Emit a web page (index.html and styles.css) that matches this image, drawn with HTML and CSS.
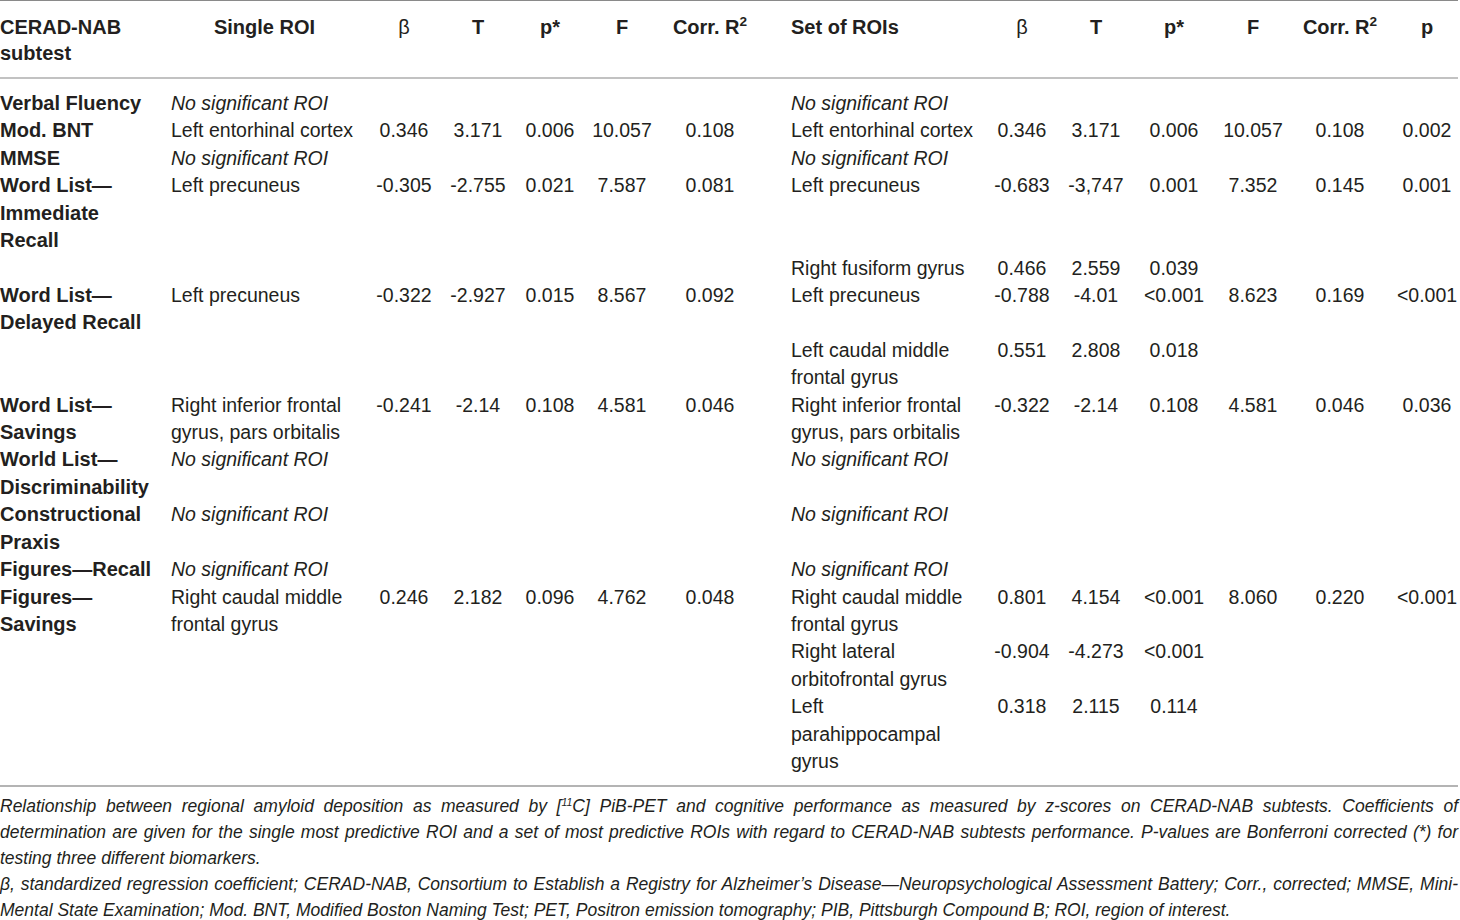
FILE: index.html
```html
<!DOCTYPE html>
<html lang="en">
<head>
<meta charset="utf-8">
<title>CERAD-NAB regional amyloid table</title>
<link rel="stylesheet" href="styles.css">
</head>
<body>
<div class="page">
<table class="data">
  <thead>
    <tr>
      <th class="c1 left">CERAD-NAB subtest</th>
      <th class="c2">Single ROI</th>
      <th class="c3 num"><span class="sym">β</span></th>
      <th class="c4 num">T</th>
      <th class="c5 num">p*</th>
      <th class="c6 num">F</th>
      <th class="c7 num">Corr. R<sup>2</sup></th>
      <th class="c8 left">Set of ROIs</th>
      <th class="c9 num"><span class="sym">β</span></th>
      <th class="c10 num">T</th>
      <th class="c11 num">p*</th>
      <th class="c12 num">F</th>
      <th class="c13 num">Corr. R<sup>2</sup></th>
      <th class="c14 num">p</th>
    </tr>
  </thead>
  <tbody>
    <tr>
      <td class="test">Verbal Fluency</td>
      <td class="roi"><em>No significant ROI</em></td>
      <td class="pb"></td><td></td><td></td><td></td><td></td>
      <td class="set"><em>No significant ROI</em></td>
      <td class="pb"></td><td></td><td></td><td></td><td></td><td class="pp"></td>
    </tr>
    <tr>
      <td class="test">Mod. BNT</td>
      <td class="roi">Left entorhinal cortex</td>
      <td class="pb">0.346</td><td>3.171</td><td>0.006</td><td>10.057</td><td>0.108</td>
      <td class="set">Left entorhinal cortex</td>
      <td class="pb">0.346</td><td>3.171</td><td>0.006</td><td>10.057</td><td>0.108</td><td class="pp">0.002</td>
    </tr>
    <tr>
      <td class="test">MMSE</td>
      <td class="roi"><em>No significant ROI</em></td>
      <td class="pb"></td><td></td><td></td><td></td><td></td>
      <td class="set"><em>No significant ROI</em></td>
      <td class="pb"></td><td></td><td></td><td></td><td></td><td class="pp"></td>
    </tr>
    <tr>
      <td class="test">Word List—Immediate Recall</td>
      <td class="roi">Left precuneus</td>
      <td class="pb">-0.305</td><td>-2.755</td><td>0.021</td><td>7.587</td><td>0.081</td>
      <td class="set">Left precuneus</td>
      <td class="pb">-0.683</td><td>-3,747</td><td>0.001</td><td>7.352</td><td>0.145</td><td class="pp">0.001</td>
    </tr>
    <tr>
      <td class="test"></td>
      <td class="roi"></td>
      <td class="pb"></td><td></td><td></td><td></td><td></td>
      <td class="set">Right fusiform gyrus</td>
      <td class="pb">0.466</td><td>2.559</td><td>0.039</td><td></td><td></td><td class="pp"></td>
    </tr>
    <tr>
      <td class="test">Word List—Delayed Recall</td>
      <td class="roi">Left precuneus</td>
      <td class="pb">-0.322</td><td>-2.927</td><td>0.015</td><td>8.567</td><td>0.092</td>
      <td class="set">Left precuneus</td>
      <td class="pb">-0.788</td><td>-4.01</td><td>&lt;0.001</td><td>8.623</td><td>0.169</td><td class="pp">&lt;0.001</td>
    </tr>
    <tr>
      <td class="test"></td>
      <td class="roi"></td>
      <td class="pb"></td><td></td><td></td><td></td><td></td>
      <td class="set">Left caudal middle frontal gyrus</td>
      <td class="pb">0.551</td><td>2.808</td><td>0.018</td><td></td><td></td><td class="pp"></td>
    </tr>
    <tr>
      <td class="test">Word List—Savings</td>
      <td class="roi">Right inferior frontal gyrus, pars orbitalis</td>
      <td class="pb">-0.241</td><td>-2.14</td><td>0.108</td><td>4.581</td><td>0.046</td>
      <td class="set">Right inferior frontal gyrus, pars orbitalis</td>
      <td class="pb">-0.322</td><td>-2.14</td><td>0.108</td><td>4.581</td><td>0.046</td><td class="pp">0.036</td>
    </tr>
    <tr>
      <td class="test">World List—Discriminability</td>
      <td class="roi"><em>No significant ROI</em></td>
      <td class="pb"></td><td></td><td></td><td></td><td></td>
      <td class="set"><em>No significant ROI</em></td>
      <td class="pb"></td><td></td><td></td><td></td><td></td><td class="pp"></td>
    </tr>
    <tr>
      <td class="test">Constructional Praxis</td>
      <td class="roi"><em>No significant ROI</em></td>
      <td class="pb"></td><td></td><td></td><td></td><td></td>
      <td class="set"><em>No significant ROI</em></td>
      <td class="pb"></td><td></td><td></td><td></td><td></td><td class="pp"></td>
    </tr>
    <tr>
      <td class="test">Figures—Recall</td>
      <td class="roi"><em>No significant ROI</em></td>
      <td class="pb"></td><td></td><td></td><td></td><td></td>
      <td class="set"><em>No significant ROI</em></td>
      <td class="pb"></td><td></td><td></td><td></td><td></td><td class="pp"></td>
    </tr>
    <tr>
      <td class="test">Figures—Savings</td>
      <td class="roi">Right caudal middle frontal gyrus</td>
      <td class="pb">0.246</td><td>2.182</td><td>0.096</td><td>4.762</td><td>0.048</td>
      <td class="set">Right caudal middle frontal gyrus</td>
      <td class="pb">0.801</td><td>4.154</td><td>&lt;0.001</td><td>8.060</td><td>0.220</td><td class="pp">&lt;0.001</td>
    </tr>
    <tr>
      <td class="test"></td>
      <td class="roi"></td>
      <td class="pb"></td><td></td><td></td><td></td><td></td>
      <td class="set">Right lateral orbitofrontal gyrus</td>
      <td class="pb">-0.904</td><td>-4.273</td><td>&lt;0.001</td><td></td><td></td><td class="pp"></td>
    </tr>
    <tr>
      <td class="test"></td>
      <td class="roi"></td>
      <td class="pb"></td><td></td><td></td><td></td><td></td>
      <td class="set">Left parahippocampal gyrus</td>
      <td class="pb">0.318</td><td>2.115</td><td>0.114</td><td></td><td></td><td class="pp"></td>
    </tr>
  </tbody>
</table>
<div class="notes">
  <p>Relationship between regional amyloid deposition as measured by [<sup>11</sup>C] PiB-PET and cognitive performance as measured by z-scores on CERAD-NAB subtests. Coefficients of determination are given for the single most predictive ROI and a set of most predictive ROIs with regard to CERAD-NAB subtests performance. P-values are Bonferroni corrected (*) for testing three different biomarkers.</p>
  <p>β, standardized regression coefficient; CERAD-NAB, Consortium to Establish a Registry for Alzheimer’s Disease—Neuropsychological Assessment Battery; Corr., corrected; MMSE, Mini-Mental State Examination; Mod. BNT, Modified Boston Naming Test; PET, Positron emission tomography; PIB, Pittsburgh Compound B; ROI, region of interest.</p>
</div>
</div>
</body>
</html>
```

FILE: styles.css
```css
html, body {
  margin: 0;
  padding: 0;
  background: #ffffff;
}

.page {
  width: 1458px;
  color: #231f20;
  font-family: "Liberation Sans", Arial, sans-serif;
}

.data {
  width: 1458px;
  table-layout: fixed;
  border-collapse: collapse;
  border-top: 1px solid #8a8a8a;
  border-bottom: 2px solid #b4b4b4;
}

.data th,
.data td {
  box-sizing: border-box;
  padding: 0;
  vertical-align: top;
}

.data thead th {
  font-size: 20px;
  line-height: 26px;
  font-weight: 700;
  text-align: center;
  padding-top: 13px;
  padding-bottom: 11px;
  border-bottom: 2px solid #c2c2c2;
}

.data thead th.left { text-align: left; }

.data .sym { font-weight: 400; }

.data sup {
  font-size: 0.68em;
  line-height: 0;
  vertical-align: 0.6em;
}

/* column widths */
.c1 { width: 171px; padding-right: 12px !important; }
.c2 { width: 187px; }
.c3 { width: 86px; padding-left: 6px !important; }
.c4 { width: 68px; }
.c5 { width: 76px; }
.c6 { width: 68px; }
.c7 { width: 108px; }
.c8 { width: 212px; padding-left: 27px !important; }
.c9 { width: 86px; padding-left: 6px !important; }
.c10 { width: 68px; }
.c11 { width: 88px; }
.c12 { width: 70px; }
.c13 { width: 104px; }
.c14 { width: 66px; padding-left: 4px !important; }

.data tbody td {
  font-size: 19.5px;
  line-height: 27.42px;
  text-align: center;
  white-space: nowrap;
}

.data tbody tr:first-child td { padding-top: 11px; }
.data tbody tr:last-child td { padding-bottom: 9px; }

.data tbody td.test {
  font-size: 20px;
  font-weight: 700;
  text-align: left;
  white-space: normal;
  padding-right: 12px;
}

.data tbody td.roi {
  text-align: left;
  white-space: normal;
  padding-right: 4px;
}

.data tbody td.set {
  text-align: left;
  white-space: normal;
  padding-left: 27px;
}

.data tbody td.pb { padding-left: 6px; }
.data tbody td.pp { padding-left: 4px; }

.notes {
  padding-top: 6px;
}

.notes p {
  margin: 0;
  font-size: 17.5px;
  line-height: 26px;
  font-style: italic;
  text-align: justify;
}

.notes sup {
  font-size: 0.6em;
  line-height: 0;
  vertical-align: 0.55em;
}
```
